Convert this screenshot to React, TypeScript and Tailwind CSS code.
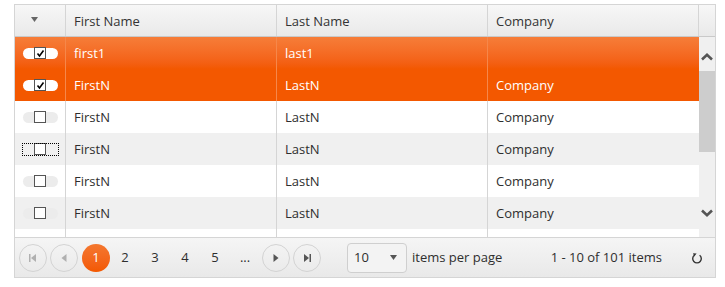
import React from "react";

interface Row {
  first: string;
  last: string;
  company: string;
  selected?: boolean;
  focused?: boolean;
}

const rows: Row[] = [
  { first: "first1", last: "last1", company: "", selected: true },
  { first: "FirstN", last: "LastN", company: "Company", selected: true },
  { first: "FirstN", last: "LastN", company: "Company" },
  { first: "FirstN", last: "LastN", company: "Company", focused: true },
  { first: "FirstN", last: "LastN", company: "Company" },
  { first: "FirstN", last: "LastN", company: "Company" },
];

function CheckBox({ checked }: { checked?: boolean }) {
  return (
    <span className="w-[12px] h-[12px] border border-[#555] bg-white flex items-center justify-center">
      {checked && (
        <svg width="9" height="9" viewBox="0 0 9 9">
          <polyline points="1.5,4.5 3.5,7 7.5,1.5" fill="none" stroke="#000" strokeWidth="1.6" />
        </svg>
      )}
    </span>
  );
}

function Toggle({ row }: { row: Row }) {
  let pill = "rounded-full bg-[#ececec]";
  if (row.selected) pill = "rounded-full bg-white";
  if (row.focused) pill = "outline outline-1 outline-dotted outline-black";
  return (
    <div className="w-full h-full flex items-center justify-center">
      <div className={`w-[35px] h-[11px] flex items-center justify-center ${pill}`}>
        <CheckBox checked={row.selected} />
      </div>
    </div>
  );
}

function PagerButton({ children, disabled }: { children: React.ReactNode; disabled?: boolean }) {
  return (
    <button
      className={`w-[28px] h-[28px] rounded-full border border-[#d3d3d3] flex items-center justify-center ${
        disabled ? "text-[#b0b0b0]" : "text-[#555]"
      }`}
    >
      {children}
    </button>
  );
}

export default function App() {
  return (
    <div className="w-[725px] h-[287px] bg-white pt-[4px] pl-[14px] font-['Open_Sans',sans-serif] text-[13px] text-[#2e2e2e]">
      <div className="w-[702px] border border-[#d5d5d5] bg-white">
        {/* Header */}
        <div className="flex h-[32px] bg-gradient-to-b from-[#f7f7f7] to-[#e9e9e9] border-b border-[#c9c9c9]">
          <div className="w-[51px] border-r border-[#d5d5d5] flex items-center pl-[16px]">
            <svg width="7" height="5" viewBox="0 0 7 5" className="mb-[3px]">
              <polygon points="0,0 7,0 3.5,5" fill="#666" />
            </svg>
          </div>
          <div className="w-[211px] border-r border-[#d5d5d5] px-2 pt-[2px] flex items-center text-[#333]">First Name</div>
          <div className="w-[211px] border-r border-[#d5d5d5] px-2 pt-[2px] flex items-center text-[#333]">Last Name</div>
          <div className="w-[211px] border-r border-[#d5d5d5] px-2 pt-[2px] flex items-center text-[#333]">Company</div>
          <div className="flex-1" />
        </div>

        {/* Body */}
        <div className="flex h-[200px] overflow-hidden">
          <div className="w-[684px]">
            {rows.map((row, i) => {
              const bg = row.selected
                ? i === 0
                  ? "bg-gradient-to-b from-[#f67d38] to-[#f35800] text-white"
                  : "bg-[#f35800] text-white"
                : i % 2 === 1
                ? "bg-[#f0f0f0]"
                : "bg-white";
              const line = row.selected ? "border-[#f6874a]" : "border-[#d5d5d5]";
              return (
                <div key={i} className={`flex h-[32px] ${bg}`}>
                  <div className={`w-[51px] border-r ${line}`}>
                    <Toggle row={row} />
                  </div>
                  <div className={`w-[211px] border-r px-2 pt-[2px] flex items-center ${line}`}>{row.first}</div>
                  <div className={`w-[211px] border-r px-2 pt-[2px] flex items-center ${line}`}>{row.last}</div>
                  <div className="w-[211px] px-2 pt-[2px] flex items-center">{row.company}</div>
                </div>
              );
            })}
            <div className="flex h-[8px] bg-white">
              <div className="w-[51px] border-r border-[#d5d5d5]" />
              <div className="w-[211px] border-r border-[#d5d5d5]" />
              <div className="w-[211px] border-r border-[#d5d5d5]" />
              <div className="w-[211px]" />
            </div>
          </div>
          {/* Scrollbar */}
          <div className="w-[16px] bg-[#f0f0f0] flex flex-col items-center">
            <div className="h-[34px] w-full flex items-center justify-center pt-[6px]">
              <svg width="12" height="8" viewBox="0 0 12 8">
                <polyline points="1,6.5 6,1.8 11,6.5" fill="none" stroke="#555" strokeWidth="2.6" />
              </svg>
            </div>
            <div className="w-full h-[81px] bg-[#cdcdcd]" />
            <div className="h-[70px] w-full flex items-end justify-center pb-[5px]">
              <svg width="12" height="8" viewBox="0 0 12 8">
                <polyline points="1,1.5 6,6.2 11,1.5" fill="none" stroke="#555" strokeWidth="2.6" />
              </svg>
            </div>
          </div>
        </div>

        {/* Pager */}
        <div className="h-[40px] border-t border-[#d5d5d5] bg-gradient-to-b from-[#f5f5f5] to-[#e9e9e9] flex items-center pl-[4px] pr-[12px]">
          <div className="flex items-center gap-[3px]">
            <PagerButton disabled>
              <svg width="8" height="8" viewBox="0 0 8 8">
                <rect x="0" y="0" width="1.5" height="8" fill="currentColor" />
                <polygon points="7,0 7,8 2,4" fill="currentColor" />
              </svg>
            </PagerButton>
            <PagerButton disabled>
              <svg width="6" height="8" viewBox="0 0 6 8">
                <polygon points="5.5,0 5.5,8 0.5,4" fill="currentColor" />
              </svg>
            </PagerButton>
          </div>
          <div className="flex items-center ml-[4px]">
            <span className="w-[28px] h-[28px] rounded-full bg-gradient-to-b from-[#f4772e] to-[#f35800] text-white flex items-center justify-center">
              1
            </span>
            {["2", "3", "4", "5", "..."].map((p) => (
              <span key={p} className="w-[30px] h-[28px] flex items-center justify-center text-[#2e2e2e]">
                {p}
              </span>
            ))}
          </div>
          <div className="flex items-center gap-[3px] ml-[2px]">
            <PagerButton>
              <svg width="6" height="8" viewBox="0 0 6 8">
                <polygon points="0.5,0 0.5,8 5.5,4" fill="currentColor" />
              </svg>
            </PagerButton>
            <PagerButton>
              <svg width="8" height="8" viewBox="0 0 8 8">
                <polygon points="1,0 1,8 6,4" fill="currentColor" />
                <rect x="6.5" y="0" width="1.5" height="8" fill="currentColor" />
              </svg>
            </PagerButton>
          </div>
          <div className="ml-[26px] w-[60px] h-[30px] border border-[#cfcfcf] rounded-[4px] bg-[#f3f3f3] flex items-center justify-between pl-[6px] pr-[9px]">
            <span>10</span>
            <svg width="7" height="5" viewBox="0 0 7 5">
              <polygon points="0,0 7,0 3.5,5" fill="#555" />
            </svg>
          </div>
          <span className="ml-[5px]">items per page</span>
          <span className="ml-auto">1 - 10 of 101 items</span>
          <svg width="12" height="12" viewBox="0 0 12 12" className="ml-[29px]">
            <path d="M8.6 3.2 A4.3 4.3 0 1 1 3.4 3.2" fill="none" stroke="#333" strokeWidth="1.4" />
            <polygon points="2,1.2 5.6,1.5 3.3,4.4" fill="#333" />
          </svg>
        </div>
      </div>
    </div>
  );
}
